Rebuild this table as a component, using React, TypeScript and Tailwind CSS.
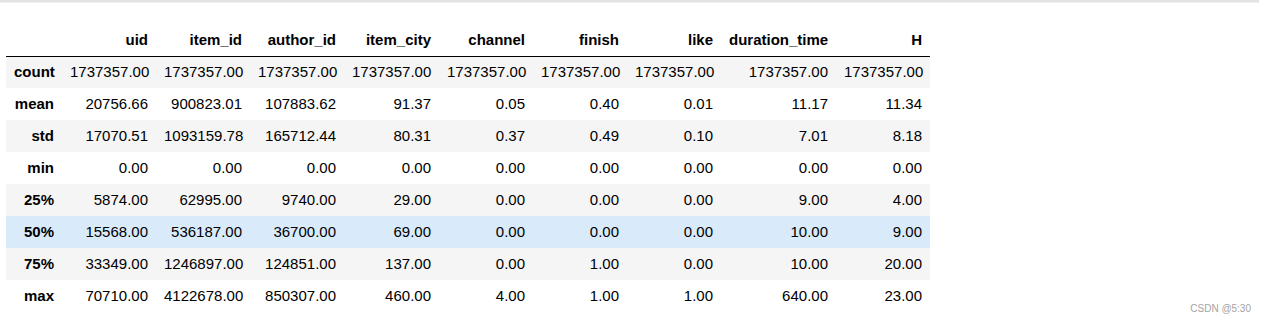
const columns = ["uid", "item_id", "author_id", "item_city", "channel", "finish", "like", "duration_time", "H"];

// column widths measured from the reference (index column first)
const widths = ["w-[56px]", "w-[94px]", "w-[94px]", "w-[94px]", "w-[95px]", "w-[94px]", "w-[94px]", "w-[94px]", "w-[115px]", "w-[94px]"];

const rows: [string, string[]][] = [
  ["count", ["1737357.00", "1737357.00", "1737357.00", "1737357.00", "1737357.00", "1737357.00", "1737357.00", "1737357.00", "1737357.00"]],
  ["mean", ["20756.66", "900823.01", "107883.62", "91.37", "0.05", "0.40", "0.01", "11.17", "11.34"]],
  ["std", ["17070.51", "1093159.78", "165712.44", "80.31", "0.37", "0.49", "0.10", "7.01", "8.18"]],
  ["min", ["0.00", "0.00", "0.00", "0.00", "0.00", "0.00", "0.00", "0.00", "0.00"]],
  ["25%", ["5874.00", "62995.00", "9740.00", "29.00", "0.00", "0.00", "0.00", "9.00", "4.00"]],
  ["50%", ["15568.00", "536187.00", "36700.00", "69.00", "0.00", "0.00", "0.00", "10.00", "9.00"]],
  ["75%", ["33349.00", "1246897.00", "124851.00", "137.00", "0.00", "1.00", "0.00", "10.00", "20.00"]],
  ["max", ["70710.00", "4122678.00", "850307.00", "460.00", "4.00", "1.00", "1.00", "640.00", "23.00"]],
];

export default function App() {
  return (
    <div className="relative w-[1264px] h-[323px] bg-white font-['Liberation_Sans',Arial,sans-serif] text-[15px] text-black">
      <div className="w-[1259px] h-[2px] bg-[#e2e2e2] border-b border-[#efefef] box-content" />
      <div className="pl-[6px] pt-[21px]">
        <table className="table-fixed border-collapse border-spacing-0 w-[924px]">
          <colgroup>
            {widths.map((w, i) => (
              <col key={i} className={w} />
            ))}
          </colgroup>
          <thead>
            <tr className="h-[32px] border-b border-black">
              <th className="px-2" />
              {columns.map((c) => (
                <th key={c} className="px-2 text-right font-bold whitespace-nowrap">
                  {c}
                </th>
              ))}
            </tr>
          </thead>
          <tbody>
            {rows.map(([name, vals], i) => (
              <tr
                key={name}
                className={`h-[32px] ${name === "50%" ? "bg-[#d9ebfa]" : i % 2 === 0 ? "bg-[#f5f5f5]" : "bg-white"}`}
              >
                <th className="px-2 text-right font-bold whitespace-nowrap">{name}</th>
                {vals.map((v, j) => (
                  <td key={j} className="px-2 text-right whitespace-nowrap">
                    {v}
                  </td>
                ))}
              </tr>
            ))}
          </tbody>
        </table>
      </div>
      <div className="absolute right-[13px] bottom-[7px] text-[10px] text-[#a3a3a3]">CSDN @5:30</div>
    </div>
  );
}
